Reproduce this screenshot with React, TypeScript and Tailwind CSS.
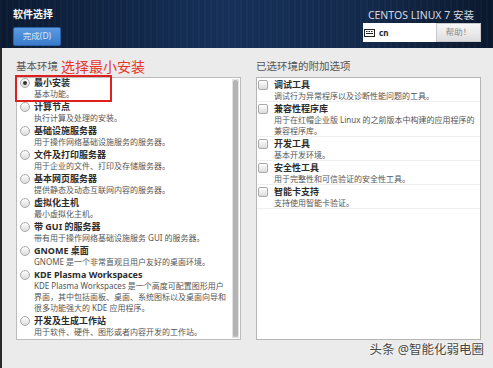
const envs = [
  { name: "最小安装", desc: ["基本功能。"], checked: true },
  { name: "计算节点", desc: ["执行计算及处理的安装。"] },
  { name: "基础设施服务器", desc: ["用于操作网络基础设施服务的服务器。"] },
  { name: "文件及打印服务器", desc: ["用于企业的文件、打印及存储服务器。"] },
  { name: "基本网页服务器", desc: ["提供静态及动态互联网内容的服务器。"] },
  { name: "虚拟化主机", desc: ["最小虚拟化主机。"] },
  { name: "带 GUI 的服务器", desc: ["带有用于操作网络基础设施服务 GUI 的服务器。"] },
  { name: "GNOME 桌面", desc: ["GNOME 是一个非常直观且用户友好的桌面环境。"] },
  {
    name: "KDE Plasma Workspaces",
    desc: [
      "KDE Plasma Workspaces 是一个高度可配置图形用户",
      "界面，其中包括面板、桌面、系统图标以及桌面向导和",
      "很多功能强大的 KDE 应用程序。",
    ],
  },
  { name: "开发及生成工作站", desc: ["用于软件、硬件、图形或者内容开发的工作站。"] },
];

const addons = [
  { name: "调试工具", desc: ["调试行为异常程序以及诊断性能问题的工具。"] },
  { name: "兼容性程序库", desc: ["用于在红帽企业版 Linux 的之前版本中构建的应用程序的", "兼容程序库。"] },
  { name: "开发工具", desc: ["基本开发环境。"] },
  { name: "安全性工具", desc: ["用于完整性和可信验证的安全性工具。"] },
  { name: "智能卡支持", desc: ["支持使用智能卡验证。"] },
];

const Radio = ({ checked }: { checked?: boolean }) => (
  <div className="mt-[1px] w-[10px] h-[10px] shrink-0 rounded-full border border-[#a9a9a9] bg-gradient-to-b from-[#ffffff] to-[#dcdcdc] flex items-center justify-center">
    {checked && <div className="w-[4px] h-[4px] rounded-full bg-[#333]" />}
  </div>
);

const Check = () => (
  <div className="mt-[1px] w-[10px] h-[10px] shrink-0 rounded-[2px] border border-[#a9a9a9] bg-gradient-to-b from-[#ffffff] to-[#dcdcdc]" />
);

const App = () => {
  return (
    <div className="relative w-[493px] h-[368px] overflow-hidden bg-[#ebebeb] font-['Noto_Sans','Noto_Sans_CJK_SC',sans-serif]">
      {/* header */}
      <div className="h-[48px] flex justify-between px-[13px] [background-image:repeating-linear-gradient(90deg,rgba(255,255,255,0.025)_0px,rgba(255,255,255,0.025)_2px,transparent_2px,transparent_6px),linear-gradient(90deg,#0b1a31,#153059_45%,#13294b_75%,#0a182c)]">
        <div className="pt-[7px]">
          <div className="text-[10px] leading-[14px] font-bold text-white">软件选择</div>
          <button className="mt-[1px] w-[48px] h-[19px] rounded-[2px] border border-[#2c63a8] bg-gradient-to-b from-[#5a9be2] to-[#3a7acb] text-[8.5px] text-[#dfeaf7]">
            完成(D)
          </button>
        </div>
        <div className="pt-[8px] flex flex-col items-end">
          <div className="text-[10.5px] leading-[14px] text-[#d6dae0] mr-[6px]">CENTOS LINUX 7 安装</div>
          <div className="mt-[1px] flex h-[19px]">
            <div className="w-[73px] bg-white flex items-center gap-[4px] pl-[1px]">
              <svg width="11" height="8" viewBox="0 0 11 8">
                <rect x="0" y="0" width="11" height="8" fill="#222" />
                <rect x="1" y="1" width="9" height="6" fill="#fff" />
                <rect x="2" y="2" width="1.5" height="1" fill="#222" />
                <rect x="4.5" y="2" width="1.5" height="1" fill="#222" />
                <rect x="7" y="2" width="1.5" height="1" fill="#222" />
                <rect x="2" y="4" width="7" height="1" fill="#222" />
              </svg>
              <span className="text-[8px] font-bold text-[#222]">cn</span>
            </div>
            <div className="w-[45px] -mr-[1px] border border-[#c9c9c9] bg-gradient-to-b from-[#f7f7f7] to-[#dedede] flex items-center justify-center text-[8.5px] text-[#888]">
              帮助！
            </div>
          </div>
        </div>
      </div>

      {/* main */}
      <div className="h-[320px] flex border-l-2 border-[#2a2a2a]">
        <div className="ml-[14px] w-[225px]">
          <div className="h-[29px] pt-[8px] flex items-center gap-[3px]">
            <span className="text-[10.5px] text-[#555]">基本环境</span>
            <span className="text-[14px] text-[#e8352b]">选择最小安装</span>
          </div>
          <div className="relative h-[263px] border border-[#bcbcbc] bg-white flex">
            <div className="flex-1 -mt-[1px]">
              {envs.map((e) => (
                <div key={e.name} className="flex gap-[4px] pl-[3px] pb-[2px]">
                  <Radio checked={e.checked} />
                  <div className="text-[8px] leading-[11px]">
                    <div className="text-[9px] font-bold text-[#2c2c2c]">{e.name}</div>
                    {e.desc.map((d) => (
                      <div key={d} className="text-[#555] whitespace-nowrap">{d}</div>
                    ))}
                  </div>
                </div>
              ))}
            </div>
            <div className="w-[7px] mr-[1px] my-[1px] bg-[#e2e2e2] flex justify-center">
              <div className="w-[5px] my-[1px] rounded-full bg-[#b3b3b3]" />
            </div>
            <div className="absolute left-[-2px] top-[-3px] w-[97px] h-[27px] border-2 border-[#e0201c]" />
          </div>
        </div>

        <div className="ml-[15px] w-[225px]">
          <div className="h-[29px] pt-[8px] flex items-center">
            <span className="text-[10.5px] text-[#555]">已选环境的附加选项</span>
          </div>
          <div className="h-[263px] border border-[#b5b5b5] bg-white">
            {addons.map((a) => (
              <div key={a.name} className="flex gap-[6px] pl-[1px] pt-[1px] border-b border-[#efefef]">
                <Check />
                <div className="text-[8px] leading-[11px]">
                  <div className="text-[9px] font-bold text-[#2c2c2c]">{a.name}</div>
                  {a.desc.map((d) => (
                    <div key={d} className="text-[#555] whitespace-nowrap">{d}</div>
                  ))}
                </div>
              </div>
            ))}
          </div>
        </div>
      </div>

      <div className="absolute right-[9px] bottom-[8px] text-[12.5px] text-[#444] [text-shadow:0_0_2px_#fff,0_0_2px_#fff]">
        头条 @智能化弱电圈
      </div>
    </div>
  );
};

export default App;
